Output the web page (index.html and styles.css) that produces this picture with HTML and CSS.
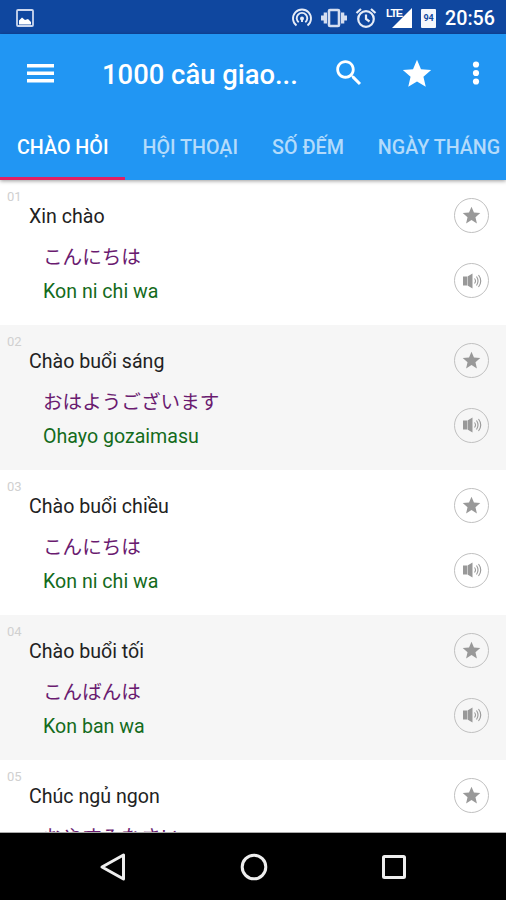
FILE: index.html
```html
<!DOCTYPE html>
<html lang="vi">
<head>
  <meta charset="UTF-8" />
  <meta name="viewport" content="width=device-width, initial-scale=1.0" />
  <title>1000 câu giao tiếp tiếng Nhật</title>
  <link rel="stylesheet" href="styles.css">
</head>
<body>
  <!-- Shared icons -->
  <svg class="hidden">
    <symbol id="star" viewBox="0 0 24 24">
      <path d="M12 17.27L18.18 21l-1.64-7.03L22 9.24l-7.19-.61L12 2 9.19 8.63 2 9.24l5.46 4.73L5.82 21z" />
    </symbol>
    <symbol id="sound" viewBox="0 0 20 18">
      <path d="M1 4.500h4v9H1zM5.500 4.500L10.500 1.500v15L5.500 13.500z" />
      <path d="M12.500 6.500q2 2.500 0 5M14.500 4.500q3 4.500 0 9M16.500 3q4.500 6 0 12" fill="none" stroke="currentColor" stroke-width="1.100" />
    </symbol>
  </svg>

  <div class="status-bar">
    <svg class="picture" width="18" height="18" viewBox="0 0 18 18">
      <rect x="1" y="1" width="16" height="16" rx="1" fill="none" stroke="#cdd8ee" stroke-width="1.800" />
      <path d="M3 15.500v-4l3-3 3 2.500 3-1 3 3v2.500z" fill="#fff" />
    </svg>
    <div class="status-icons">
      <svg width="22" height="20" viewBox="0 0 22 20" fill="none" stroke="#e6ecf7" stroke-width="1.900">
        <path d="M5.500 17.600a9 9 0 1 1 11 0M7.700 14.300a5.300 5.300 0 1 1 6.600 0" />
        <circle cx="11" cy="10.500" r="2" fill="#e6ecf7" stroke="none" />
        <path d="M11 11v3" />
      </svg>
      <svg width="26" height="20" viewBox="0 0 26 20" fill="#d5def0">
        <rect x="8" y="2" width="10" height="16" rx="1" fill="none" stroke="#d5def0" stroke-width="2.600" />
        <path d="M2.700 4.500h3.300v11H2.700zM20 4.500h3.300v11H20zM0 7.500h3v5H0zM23 7.500h3v5h-3z" />
      </svg>
      <svg width="22" height="20" viewBox="0 0 22 20" fill="none" stroke="#e6ecf7" stroke-width="2.200">
        <circle cx="11" cy="11" r="7.800" />
        <path d="M11 6.500V11l3.500 2.500M1.500 5l4.500-4M20.500 5L16 1" />
      </svg>
      <div class="signal">
        <span class="lte">LTE</span>
        <svg width="20" height="20" viewBox="0 0 20 20"><path d="M20 0v20H0z" fill="#fff" /></svg>
      </div>
      <div class="battery">94</div>
      <span class="clock">20:56</span>
    </div>
  </div>

  <header class="header">
    <div class="toolbar">
      <svg class="menu" width="27" height="20" viewBox="0 0 27 20" fill="#fff">
        <path d="M0 1h27v3.500H0zM0 8.500h27V12H0zM0 16h27v3.500H0z" />
      </svg>
      <h1 class="title">1000 câu giao...</h1>
      <svg class="search" width="34" height="34" viewBox="0 0 24 24" fill="#fff">
        <path d="M15.500 14h-.79l-.28-.27C15.410 12.590 16 11.110 16 9.500 16 5.910 13.090 3 9.500 3S3 5.910 3 9.500 5.910 16 9.500 16c1.610 0 3.090-.59 4.230-1.570l.27.28v.79l5 4.990L20.490 19l-4.990-5zm-6 0C7.010 14 5 11.990 5 9.500S7.010 5 9.500 5 14 7.010 14 9.500 11.990 14 9.500 14z" />
      </svg>
      <svg class="favorite" width="34" height="34" fill="#fff"><use href="#star" /></svg>
      <svg class="more" width="8" height="26" viewBox="0 0 8 26" fill="#fff">
        <circle cx="4" cy="4.500" r="3.100" />
        <circle cx="4" cy="13" r="3.100" />
        <circle cx="4" cy="21.500" r="3.100" />
      </svg>
    </div>
    <nav class="tabs">
      <a class="tab active">CHÀO HỎI</a>
      <a class="tab">HỘI THOẠI</a>
      <a class="tab">SỐ ĐẾM</a>
      <a class="tab">NGÀY THÁNG</a>
    </nav>
  </header>

  <main class="list">
    <div class="phrase">
      <span class="number">01</span>
      <div class="texts">
        <div class="vi">Xin chào</div>
        <div class="ja" lang="ja">こんにちは</div>
        <div class="romaji">Kon ni chi wa</div>
      </div>
      <div class="actions">
        <span class="round-btn"><svg width="21" height="21"><use href="#star" /></svg></span>
        <span class="round-btn"><svg width="20" height="18"><use href="#sound" /></svg></span>
      </div>
    </div>
    <div class="phrase">
      <span class="number">02</span>
      <div class="texts">
        <div class="vi">Chào buổi sáng</div>
        <div class="ja" lang="ja">おはようございます</div>
        <div class="romaji">Ohayo gozaimasu</div>
      </div>
      <div class="actions">
        <span class="round-btn"><svg width="21" height="21"><use href="#star" /></svg></span>
        <span class="round-btn"><svg width="20" height="18"><use href="#sound" /></svg></span>
      </div>
    </div>
    <div class="phrase">
      <span class="number">03</span>
      <div class="texts">
        <div class="vi">Chào buổi chiều</div>
        <div class="ja" lang="ja">こんにちは</div>
        <div class="romaji">Kon ni chi wa</div>
      </div>
      <div class="actions">
        <span class="round-btn"><svg width="21" height="21"><use href="#star" /></svg></span>
        <span class="round-btn"><svg width="20" height="18"><use href="#sound" /></svg></span>
      </div>
    </div>
    <div class="phrase">
      <span class="number">04</span>
      <div class="texts">
        <div class="vi">Chào buổi tối</div>
        <div class="ja" lang="ja">こんばんは</div>
        <div class="romaji">Kon ban wa</div>
      </div>
      <div class="actions">
        <span class="round-btn"><svg width="21" height="21"><use href="#star" /></svg></span>
        <span class="round-btn"><svg width="20" height="18"><use href="#sound" /></svg></span>
      </div>
    </div>
    <div class="phrase">
      <span class="number">05</span>
      <div class="texts">
        <div class="vi">Chúc ngủ ngon</div>
        <div class="ja" lang="ja">おやすみなさい</div>
      </div>
      <div class="actions">
        <span class="round-btn"><svg width="21" height="21"><use href="#star" /></svg></span>
      </div>
    </div>
  </main>

  <footer class="nav-bar">
    <svg width="28" height="30" viewBox="0 0 28 30"><path d="M24.500 3v24L3 15z" /></svg>
    <svg width="28" height="30" viewBox="0 0 28 30"><circle cx="14" cy="15" r="11.800" /></svg>
    <svg width="28" height="30" viewBox="0 0 28 30"><rect x="3.500" y="4.500" width="21" height="21" rx="1" /></svg>
  </footer>
</body>
</html>
```
FILE: styles.css
```css
* {
  box-sizing: border-box;
}
body {
  margin: 0;
  height: 900px;
  display: flex;
  flex-direction: column;
  overflow: hidden;
  background: #fff;
  font-family: Roboto, "Noto Sans CJK JP", sans-serif;
}
svg {
  display: block;
  flex: none;
}
.hidden {
  display: none;
}
.status-bar {
  flex: none;
  height: 34px;
  padding: 2px 11px 0 16px;
  display: flex;
  align-items: center;
  justify-content: space-between;
  background: #0f479f;
  color: #fff;
}
.status-icons {
  display: flex;
  align-items: center;
}
.status-icons > * {
  margin-left: 9px;
}
.status-icons > svg + svg {
  margin-left: 8px;
}
.signal {
  display: flex;
}
.signal svg {
  margin-left: -8px;
}
.lte {
  font-family: "Liberation Sans", sans-serif;
  font-size: 11px;
  font-weight: bold;
  line-height: 10px;
  letter-spacing: -1.5px;
  width: 14px;
}
.battery {
  width: 15px;
  height: 19px;
  border-radius: 1px;
  background: #f4f7fc;
  color: #0f479f;
  font-size: 9px;
  font-weight: bold;
  line-height: 19px;
  text-align: center;
}
.clock {
  font-size: 19.7px;
  font-weight: 500;
}
.header {
  flex: none;
  height: 146px;
  background: #2196f3;
  color: #fff;
  box-shadow: 0 1px 4px rgba(0,0,0,0.4);
  z-index: 1;
}
.toolbar {
  height: 78px;
  padding-left: 27px;
  display: flex;
  align-items: center;
}
.title {
  width: 198px;
  margin: 3px 0 0 48px;
  font-size: 27.4px;
  font-weight: 500;
  white-space: nowrap;
}
.search {
  margin-left: 32px;
}
.favorite {
  margin: 2px 0 0 34px;
}
.more {
  margin-left: 38px;
}
.tabs {
  height: 68px;
  display: flex;
}
.tab {
  flex: none;
  padding: 0 17px;
  font-size: 19.7px;
  font-weight: 500;
  line-height: 72px;
  white-space: nowrap;
  color: #b3dbfb;
}
.active {
  color: #fff;
  border-bottom: 3px solid #e01f63;
}
.list {
  flex: 1;
  min-height: 0;
  overflow: hidden;
  border-bottom: 1px solid #aaa;
}
.phrase {
  height: 144.9px;
  display: flex;
}
.phrase:nth-child(even) {
  background: #f6f6f6;
}
.number {
  width: 29px;
  padding: 9px 0 0 7px;
  font-size: 13px;
  line-height: 16px;
  color: #d0d0d0;
}
.texts {
  flex: 1;
  padding-top: 17px;
}
.vi {
  font-size: 19.6px;
  line-height: 40px;
  color: #222;
}
.ja {
  height: 41px;
  padding: 1px 0 0 14px;
  font-size: 19.6px;
  line-height: 40px;
  color: #6a1b70;
}
.romaji {
  padding-left: 14px;
  font-size: 19.6px;
  line-height: 28px;
  color: #146b1c;
}
.actions {
  width: 52px;
  padding-top: 18px;
}
.round-btn {
  width: 35px;
  height: 35px;
  margin-bottom: 30px;
  display: flex;
  align-items: center;
  justify-content: center;
  border: 1.500px solid #c0c0c0;
  border-radius: 50%;
  color: #999;
  fill: #999;
}
.nav-bar {
  flex: none;
  height: 67px;
  padding: 0 98px 0 99px;
  display: flex;
  align-items: center;
  justify-content: space-between;
  background: #000;
}
.nav-bar svg {
  fill: none;
  stroke: #eee;
  stroke-width: 3;
  stroke-linejoin: round;
}
```
